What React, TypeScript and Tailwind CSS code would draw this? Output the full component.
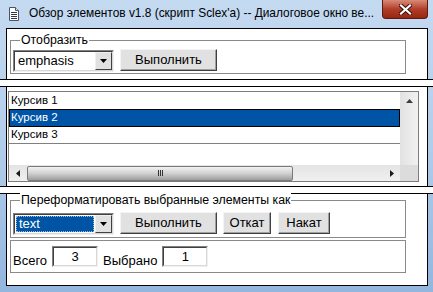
import React from "react";

function Btn({ className, children }: { className: string; children: React.ReactNode }) {
  return (
    <div
      className={`flex h-[22px] items-center justify-center border border-t-[#f4f4f4] border-l-[#f4f4f4] border-r-[#404040] border-b-[#404040] bg-[#e1e1e1] shadow-[inset_-1px_-1px_0_#a0a0a0] ${className}`}
    >
      {children}
    </div>
  );
}

function ArrowDown() {
  return (
    <svg width="7" height="4" viewBox="0 0 7 4">
      <path d="M0 0h7L3.5 4z" fill="#000" />
    </svg>
  );
}

function Combo({ value, selected, className }: { value: string; selected?: boolean; className: string }) {
  return (
    <div
      className={`flex h-[22px] w-[101px] border border-t-[#808080] border-l-[#808080] border-r-[#f0f0f0] border-b-[#f0f0f0] ${className}`}
    >
      <div className="flex flex-1 border border-t-[#404040] border-l-[#404040] border-r-[#d8d8d8] border-b-[#d8d8d8] bg-white">
        <div className="flex flex-1 p-[1px]">
          {selected ? (
            <div className="flex flex-1 items-center border border-dotted border-[#9fb9d6] bg-[#0054a6] pl-[2px] text-white">
              {value}
            </div>
          ) : (
            <div className="flex flex-1 items-center pl-[2px]">{value}</div>
          )}
        </div>
        <div className="flex w-[17px] items-center justify-center border border-t-[#f0f0f0] border-l-[#f0f0f0] border-r-[#404040] border-b-[#404040] bg-[#e1e1e1]">
          <ArrowDown />
        </div>
      </div>
    </div>
  );
}

function Group({ label, className, children }: { label?: string; className: string; children: React.ReactNode }) {
  return (
    <div className={`ml-[3px] w-[396px] border border-[#8a8a8a] ${className}`}>
      {label && (
        <div className="-mt-[8px] ml-[9px] w-fit bg-white px-[1px] text-[12.3px] leading-[15px]">{label}</div>
      )}
      {children}
    </div>
  );
}

function Field({ value }: { value: string }) {
  return (
    <div className="mt-[5px] flex h-[21px] w-[46px] border border-t-[#808080] border-l-[#808080] border-r-[#f0f0f0] border-b-[#f0f0f0]">
      <div className="flex flex-1 justify-center border border-t-[#404040] border-l-[#404040] border-r-[#d8d8d8] border-b-[#d8d8d8] bg-white pt-[1px] leading-[15px]">
        {value}
      </div>
    </div>
  );
}

function Splitter() {
  return <div className="h-[8px] w-full border-y border-black bg-white" />;
}

export default function App() {
  return (
    <div className="flex h-[292px] w-[433px] flex-col overflow-hidden bg-gradient-to-b from-[#c4daf1] via-[#b2cdea] to-[#93b6de] font-['Liberation_Sans',Arial,sans-serif] text-[13px] text-black">
      {/* title bar */}
      <div className="flex h-[28px] shrink-0">
        <div className="flex items-center">
          <svg className="ml-[9px]" width="10" height="14" viewBox="0 0 10 14">
            <path d="M0.5 0.5h6l3 3v10h-9z" fill="#fff" stroke="#4a5568" />
            <path d="M6.5 0.5v3h3" fill="#e2e8f0" stroke="#4a5568" />
            <path d="M2 5.5h6M2 7.5h6M2 9.5h6M2 11.5h6" stroke="#2d3a4a" />
          </svg>
          <span className="ml-[10px] whitespace-nowrap text-[11.9px]">
            Обзор элементов v1.8 (скрипт Sclex'a) -- Диалоговое окно ве...
          </span>
        </div>
        <div className="ml-auto mr-[5px] flex h-[19px] w-[46px] items-center justify-center rounded-b-[4px] border border-t-0 border-[#5a1a10] bg-gradient-to-b from-[#d98a78] via-[#b03e2a] to-[#98260f]">
          <svg width="13" height="11" viewBox="0 0 13 11">
            <path d="M2 1.5l9 8M11 1.5l-9 8" stroke="#3a0c05" strokeWidth="4" strokeLinecap="square" />
            <path d="M2 1.5l9 8M11 1.5l-9 8" stroke="#fff" strokeWidth="2.2" strokeLinecap="square" />
          </svg>
        </div>
      </div>

      {/* panel 1 */}
      <div className="ml-[6px] h-[51px] w-[422px] shrink-0 border-x border-t border-black bg-white">
        <Group label="Отобразить" className="mt-[11px] h-[34px]">
          <div className="flex items-start pl-[2px]">
            <Combo value="emphasis" className="mt-[2px]" />
            <Btn className="ml-[6px] mt-[1px] w-[97px]">Выполнить</Btn>
          </div>
        </Group>
      </div>

      <Splitter />

      {/* panel 2 */}
      <div className="ml-[6px] h-[99px] w-[422px] shrink-0 border-x border-black bg-white">
        <div className="ml-[1px] mt-[4px] grid h-[91px] w-[411px] grid-cols-[391px_18px] grid-rows-[73px_16px] border border-[#7c7c7c] text-[11.5px]">
          <div className="flex flex-col">
            <div className="flex h-[17px] items-center pl-[2px]">Курсив 1</div>
            <div className="flex h-[18px] items-center border border-black bg-[#0054a6] pl-[1px] text-white">Курсив 2</div>
            <div className="flex h-[17px] items-center border-b border-[#808080] pl-[2px]">Курсив 3</div>
          </div>
          <div className="flex flex-col bg-gradient-to-r from-[#e2e2e2] to-[#f1f1f1]">
            <div className="flex h-[17px] items-center justify-center">
              <svg width="7" height="4" viewBox="0 0 7 4">
                <path d="M0 4h7L3.5 0z" fill="#3c3c3c" />
              </svg>
            </div>
          </div>
          <div className="flex items-center bg-gradient-to-b from-[#e4e4e4] to-[#f0f0f0]">
            <div className="flex w-[17px] items-center justify-center">
              <svg width="4" height="7" viewBox="0 0 4 7">
                <path d="M4 0v7L0 3.5z" fill="#1a1a1a" />
              </svg>
            </div>
            <div className="ml-[1px] flex h-[15px] w-[266px] items-center justify-center rounded-[2px] border border-[#7a7a7a] bg-gradient-to-b from-[#f2f2f2] via-[#d0d0d0] to-[#9e9e9e]">
              <div className="flex gap-[1px]">
                <div className="h-[6px] w-[1px] bg-[#333]" />
                <div className="h-[6px] w-[1px] bg-[#333]" />
                <div className="h-[6px] w-[1px] bg-[#333]" />
              </div>
            </div>
            <div className="ml-auto flex w-[17px] items-center justify-center">
              <svg width="4" height="7" viewBox="0 0 4 7">
                <path d="M0 0v7L4 3.5z" fill="#1a1a1a" />
              </svg>
            </div>
          </div>
          <div className="bg-[#dcdcdc]" />
        </div>
      </div>

      <Splitter />

      {/* panel 3 */}
      <div className="ml-[6px] h-[92px] w-[422px] shrink-0 border-x border-b border-black bg-white">
        <Group label="Переформатировать выбранные элементы как" className="mt-[6px] h-[38px]">
          <div className="flex items-start pl-[2px]">
            <Combo value="text" selected className="mt-[5px]" />
            <Btn className="ml-[6px] mt-[4px] w-[97px]">Выполнить</Btn>
            <Btn className="ml-[6px] mt-[4px] w-[48px]">Откат</Btn>
            <Btn className="ml-[7px] mt-[4px] w-[52px]">Накат</Btn>
          </div>
        </Group>
        <Group className="mt-[2px] h-[33px]">
          <div className="flex items-start pl-[2px]">
            <span className="mt-[12px] leading-[15px]">Всего</span>
            <div className="ml-[5px]">
              <Field value="3" />
            </div>
            <span className="ml-[5px] mt-[12px] leading-[15px]">Выбрано</span>
            <div className="ml-[5px]">
              <Field value="1" />
            </div>
          </div>
        </Group>
      </div>
    </div>
  );
}
